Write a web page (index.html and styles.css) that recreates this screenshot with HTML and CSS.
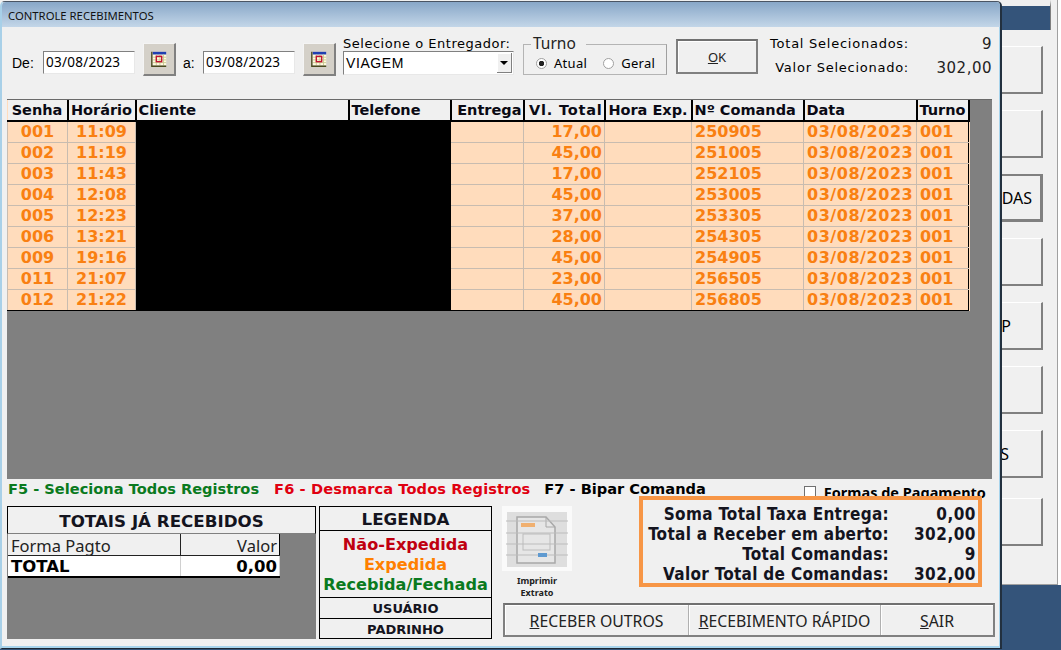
FILE: index.html
```html
<!DOCTYPE html>
<html lang="pt-BR">
<head>
    <meta charset="UTF-8">
    <meta name="viewport" content="width=device-width, initial-scale=1.0">
    <title>Controle Recebimentos</title>
    <link rel="stylesheet" href="styles.css">
</head>
<body>

    <!-- Janela principal, quase toda coberta pelo dialogo -->
    <div class="back-window">
        <div class="back-panel">
            <div class="back-title"></div>
            <div class="back-buttons">
                <button class="back-btn"></button>
                <button class="back-btn"></button>
                <button class="back-btn selected">DAS</button>
                <button class="back-btn"></button>
                <button class="back-btn tail-p">P</button>
                <button class="back-btn"></button>
                <button class="back-btn tail-s">S</button>
                <button class="back-btn last"></button>
            </div>
        </div>
    </div>

    <!-- Dialogo -->
    <div class="dialog">
        <div class="titlebar">CONTROLE RECEBIMENTOS</div>

        <div class="toolbar">
            <span class="lbl lbl-de">De:</span>
            <div class="date-input">03/08/2023</div>
            <button class="cal-btn">
                <svg width="18" height="18" viewBox="0 0 20 20">
                    <rect x="3" y="2" width="15" height="15" fill="#fffbe0"/>
                    <rect x="3" y="2" width="15" height="3" fill="#1f3fb0"/>
                    <path d="M3 8h15M3 11h15M3 14h15M7 5v12M11 5v12M15 5v12" stroke="#c8c890" stroke-width="1"/>
                    <rect x="7" y="7" width="6" height="6" fill="none" stroke="#c01030" stroke-width="1.5"/>
                    <path d="M2 2v16h16" fill="none" stroke="#4a4a20" stroke-width="1.5"/>
                </svg>
            </button>
            <span class="lbl lbl-a">a:</span>
            <div class="date-input">03/08/2023</div>
            <button class="cal-btn">
                <svg width="18" height="18" viewBox="0 0 20 20">
                    <rect x="3" y="2" width="15" height="15" fill="#fffbe0"/>
                    <rect x="3" y="2" width="15" height="3" fill="#1f3fb0"/>
                    <path d="M3 8h15M3 11h15M3 14h15M7 5v12M11 5v12M15 5v12" stroke="#c8c890" stroke-width="1"/>
                    <rect x="7" y="7" width="6" height="6" fill="none" stroke="#c01030" stroke-width="1.5"/>
                    <path d="M2 2v16h16" fill="none" stroke="#4a4a20" stroke-width="1.5"/>
                </svg>
            </button>

            <div class="combo-group">
                <div class="combo-label">Selecione o Entregador:</div>
                <div class="combo">
                    <span class="combo-value">VIAGEM</span>
                    <span class="combo-arrow"></span>
                </div>
            </div>

            <div class="turno">
                <span class="turno-legend">Turno</span>
                <div class="turno-options">
                    <span class="radio checked"></span><span class="radio-text">Atual</span>
                    <span class="radio"></span><span class="radio-text">Geral</span>
                </div>
            </div>

            <button class="ok-btn"><u>O</u>K</button>

            <div class="selected-totals">
                <span class="st-label">Total Selecionados:</span><span class="st-value">9</span>
                <span class="st-label">Valor Selecionado:</span><span class="st-value">302,00</span>
            </div>
        </div>

        <div class="grid-area">
            <table class="grid">
                <colgroup>
                    <col class="c-senha"><col class="c-hora"><col class="c-cliente"><col class="c-fone"><col class="c-entrega">
                    <col class="c-total"><col class="c-exp"><col class="c-comanda"><col class="c-data"><col class="c-turno">
                </colgroup>
                <thead>
                    <tr>
                        <th class="center">Senha</th><th class="center">Horário</th><th>Cliente</th><th>Telefone</th><th class="th-right">Entrega</th>
                        <th class="th-right th-wide">Vl. Total</th><th class="center">Hora Exp.</th><th>Nº Comanda</th><th>Data</th><th class="center">Turno</th>
                    </tr>
                </thead>
                <tbody id="gridBody"></tbody>
            </table>
        </div>

        <div class="hints">
            <span class="hint green">F5 - Seleciona Todos Registros</span>
            <span class="hint red">F6 - Desmarca Todos Registros</span>
            <span class="hint black">F7 - Bipar Comanda</span>
            <label class="check-row"><span class="check"></span>Formas de Pagamento</label>
        </div>

        <div class="bottom">
            <div class="recebidos">
                <div class="recebidos-title">TOTAIS JÁ RECEBIDOS</div>
                <table class="pay-table">
                    <tr class="pay-head"><td>Forma Pagto</td><td class="right">Valor</td></tr>
                    <tr class="pay-total"><td>TOTAL</td><td class="right">0,00</td></tr>
                </table>
            </div>

            <div class="legenda">
                <div class="leg-title">LEGENDA</div>
                <div class="leg-colors">
                    <div class="leg-red">Não-Expedida</div>
                    <div class="leg-orange">Expedida</div>
                    <div class="leg-green">Recebida/Fechada</div>
                </div>
                <div class="leg-row">USUÁRIO</div>
                <div class="leg-row">PADRINHO</div>
            </div>

            <div class="print">
                <div class="print-icon">
                    <svg width="70" height="65" viewBox="0 0 70 65">
                        <filter id="soft"><feGaussianBlur stdDeviation="0.45"/></filter>
                        <rect width="70" height="65" fill="#fafafa"/>
                        <g filter="url(#soft)">
                            <rect x="5" y="6" width="60" height="55" fill="#dedede"/>
                            <path d="M15 11h29l9 10v36h-38z" fill="#e6e6e6" stroke="#a8a8a8" stroke-width="1.5"/>
                            <path d="M44 11v10h9" fill="none" stroke="#a8a8a8" stroke-width="1"/>
                            <path d="M4 15h62M4 27h62M4 38h62M4 49h62" stroke="#bcbcbc" stroke-width="1"/>
                            <rect x="19" y="17" width="14" height="4" fill="#f0b070"/>
                            <rect x="21" y="28" width="27" height="16" fill="none" stroke="#bcbcbc" stroke-width="1"/>
                            <rect x="36" y="47" width="9" height="4" fill="#5f9ad0"/>
                        </g>
                    </svg>
                </div>
                <div class="print-text">Imprimir<br>Extrato</div>
            </div>

            <div class="right-col">
                <div class="summary">
                    <span class="sum-label">Soma Total Taxa Entrega:</span><span class="sum-value">0,00</span>
                    <span class="sum-label">Total a Receber em aberto:</span><span class="sum-value">302,00</span>
                    <span class="sum-label">Total Comandas:</span><span class="sum-value">9</span>
                    <span class="sum-label">Valor Total de Comandas:</span><span class="sum-value">302,00</span>
                </div>
                <div class="actions">
                    <button class="act-btn act-outros"><u>R</u>ECEBER OUTROS</button>
                    <button class="act-btn act-rapido"><u>R</u>ECEBIMENTO RÁPIDO</button>
                    <button class="act-btn act-sair"><u>S</u>AIR</button>
                </div>
            </div>
        </div>
    </div>

    <script>
        const rows = [
            ["001", "11:09", "17,00", "250905"],
            ["002", "11:19", "45,00", "251005"],
            ["003", "11:43", "17,00", "252105"],
            ["004", "12:08", "45,00", "253005"],
            ["005", "12:23", "37,00", "253305"],
            ["006", "13:21", "28,00", "254305"],
            ["009", "19:16", "45,00", "254905"],
            ["011", "21:07", "23,00", "256505"],
            ["012", "21:22", "45,00", "256805"]
        ];

        const body = document.getElementById("gridBody");

        rows.forEach((r) => {
            const tr = document.createElement("tr");
            tr.innerHTML = `
                <td class="center">${r[0]}</td>
                <td class="center">${r[1]}</td>
                <td class="hidden-cell" colspan="2"></td>
                <td></td>
                <td class="right">${r[2]}</td>
                <td></td>
                <td>${r[3]}</td>
                <td class="date-cell">03/08/2023</td>
                <td>001</td>`;
            body.appendChild(tr);
        });
    </script>
</body>
</html>
```

FILE: styles.css
```css
/* Geral */
html, body {
    margin: 0;
    padding: 0;
    height: 650px;
    overflow: hidden;
    background-color: #34547a;
    font-family: "DejaVu Sans", sans-serif;
    color: #000;
}

button {
    padding: 0;
    font-family: inherit;
    cursor: pointer;
}

/* Janela de tras */
.back-window {
    position: absolute;
    top: 0;
    left: 0;
    width: 1061px;
    height: 585px;
    background-color: #fff;
}

.back-panel {
    width: 1057px;
    height: 584px;
    background-color: #f0f0f0;
    border-right: 1px solid #a0a0a0;
    border-bottom: 1px solid #a0a0a0;
}

.back-title {
    height: 24px;
    width: 1050px;
    margin-top: 0;
    border-top: 6px solid #f0f0f0;
    border-right: 1px solid #808080;
    background-color: #34547a;
}

.back-buttons {
    display: flex;
    flex-direction: column;
    align-items: flex-end;
    gap: 16px;
    width: 1043px;
    padding-top: 16px;
}

.back-btn {
    width: 140px;
    height: 48px;
    box-sizing: border-box;
    background-color: #f0f0f0;
    border: none;
    border-top: 1px solid #fff;
    border-left: 1px solid #fff;
    border-right: 2px solid #808080;
    border-bottom: 2px solid #808080;
    font-family: "Noto Sans", sans-serif;
    font-size: 16px;
    text-align: right;
    padding-right: 8px;
    color: #000;
}

.back-btn.selected {
    border-top: 2px solid #808080;
    border-left: 2px solid #808080;
    border-right: 3px solid #808080;
    border-bottom: 3px solid #808080;
}

.back-btn.tail-p { padding-right: 30px; }
.back-btn.tail-s { padding-right: 32px; }
.back-btn.last { margin-top: 4px; }

/* Dialogo */
.dialog {
    position: absolute;
    top: 1px;
    left: 0;
    width: 1002px;
    height: 648px;
    box-sizing: border-box;
    background-color: #f0f0f0;
    border: 1px solid #1d2733;
    border-left: 2px solid #a8d0e8;
    border-right: 2px solid #22303f;
    border-top: 1px solid #4a5564;
    border-radius: 5px 5px 0 0;
    box-shadow: inset -1px 0 0 #a8d4ec, inset 0 -2px 0 #a8d4ec;
    display: flex;
    flex-direction: column;
}

.titlebar {
    height: 25px;
    flex: none;
    padding-left: 6px;
    background: linear-gradient(#88a7c8, #c3d6e8);
    border-radius: 4px 4px 0 0;
    font-family: "Noto Sans", sans-serif;
    font-size: 11.3px;
    line-height: 28px;
    color: #111;
    white-space: nowrap;
}

/* Barra de filtros */
.toolbar {
    display: flex;
    align-items: flex-start;
    height: 72px;
    flex: none;
}

.lbl {
    font-family: "Liberation Sans", sans-serif;
    font-size: 14px;
}

.lbl-de { margin: 28px 0 0 10px; width: 31px; }
.lbl-a { margin: 28px 0 0 7px; width: 20px; }

.date-input {
    width: 92px;
    height: 23px;
    margin-top: 24px;
    box-sizing: border-box;
    background-color: #fff;
    border: 1px solid #808080;
    border-right-color: #e8e8e8;
    border-bottom-color: #e8e8e8;
    font-family: "Noto Sans", sans-serif;
    font-size: 13.5px;
    line-height: 20px;
    letter-spacing: 0.25px;
    padding-left: 2px;
}

.cal-btn {
    width: 33px;
    height: 33px;
    margin: 16px 0 0 8px;
    display: flex;
    align-items: center;
    justify-content: center;
    background-color: #d4d0c8;
    border: 1px solid #f4f4f4;
    border-right: 2px solid #808080;
    border-bottom: 2px solid #808080;
}

.combo-group {
    width: 173px;
    margin: 9px 0 0 7px;
}

.combo-label {
    font-size: 13px;
    letter-spacing: 0.52px;
    line-height: 15px;
    white-space: nowrap;
}

.combo {
    display: flex;
    justify-content: space-between;
    align-items: center;
    width: 171px;
    height: 24px;
    box-sizing: border-box;
    background-color: #fff;
    border: 1px solid #808080;
    border-right-color: #e8e8e8;
    border-bottom-color: #e8e8e8;
}

.combo-value {
    font-family: "Liberation Sans", sans-serif;
    font-size: 14px;
    letter-spacing: 0.6px;
    padding-left: 2px;
}

.combo-arrow {
    position: relative;
    width: 15px;
    height: 20px;
    margin-right: 1px;
    background-color: #f0f0f0;
    box-shadow: inset -1px -1px 0 #808080, inset 1px 1px 0 #fff;
}

.combo-arrow::after {
    content: "";
    position: absolute;
    top: 8px;
    left: 3px;
    border-top: 4px solid #000;
    border-left: 4px solid transparent;
    border-right: 4px solid transparent;
}

.turno {
    position: relative;
    width: 144px;
    height: 31px;
    box-sizing: border-box;
    margin: 17px 0 0 7px;
    border: 1px solid #b4b4b4;
    border-right-color: #a0a0a0;
    padding-top: 10px;
}

.turno-legend {
    position: absolute;
    top: -12px;
    left: 7px;
    padding: 0 10px 0 2px;
    background-color: #f0f0f0;
    font-family: "Noto Sans", sans-serif;
    font-size: 15.5px;
    line-height: 20px;
    color: #222;
}

.turno-options {
    display: flex;
    align-items: center;
    font-family: "Noto Sans", sans-serif;
    font-size: 13px;
    line-height: 16px;
    padding-left: 12px;
}

.radio {
    flex: none;
    width: 9px;
    height: 9px;
    border-radius: 50%;
    border: 1px solid #a0a0a0;
    background-color: #fff;
    box-sizing: content-box;
}

.radio.checked {
    background: radial-gradient(circle, #222 0 2.5px, #fff 3px);
}

.radio-text {
    margin-left: 7px;
    margin-right: 16px;
    letter-spacing: 0.3px;
}

.radio-text:last-child {
    margin-right: 0;
}

.ok-btn {
    width: 82px;
    height: 35px;
    margin: 12px 0 0 9px;
    box-sizing: border-box;
    background-color: #f0f0f0;
    border: 2px solid #808080;
    border-top-color: #707070;
    box-shadow: inset 1px 1px 0 #fff;
    font-family: "Noto Sans", sans-serif;
    font-size: 13px;
    color: #222;
}

.selected-totals {
    display: grid;
    grid-template-columns: 140px 83px;
    grid-auto-rows: 24px;
    margin: 5px 0 0 11px;
    width: 223px;
    font-size: 13px;
    line-height: 24px;
    white-space: nowrap;
}

.st-label {
    text-align: right;
    letter-spacing: 0.75px;
}

.st-value {
    text-align: right;
    font-size: 15px;
    letter-spacing: 0.5px;
    color: #222;
}

/* Grade */
.grid-area {
    height: 380px;
    flex: none;
    margin: 0 7px 0 5px;
    background-color: #808080;
    border-top: 1px solid #6a6a6a;
    box-sizing: border-box;
    width: 985px;
}

.grid {
    border-collapse: collapse;
    table-layout: fixed;
    width: 961px;
    font-size: 16px;
    font-weight: bold;
    color: #f98012;
    background-color: #ffdcbc;
}

.c-senha { width: 60px; }
.c-hora { width: 68px; }
.c-cliente { width: 213px; }
.c-fone { width: 102px; }
.c-entrega { width: 73px; }
.c-total { width: 81px; }
.c-exp { width: 87px; }
.c-comanda { width: 112px; }
.c-data { width: 113px; }
.c-turno { width: 52px; }

.grid th {
    height: 20px;
    padding: 1px 0 0 2px;
    box-sizing: border-box;
    background-color: #f0f0f0;
    border-right: 2px solid #000;
    border-bottom: 2px solid #000;
    font-size: 14.5px;
    line-height: 19px;
    color: #0a0a14;
    text-align: left;
    white-space: nowrap;
    overflow: hidden;
}

.grid th.center {
    padding-left: 0;
    text-align: center;
}

.grid th.th-right {
    padding: 1px 1px 0 0;
    text-align: right;
}

.grid th.th-wide {
    letter-spacing: 0.8px;
}

.grid td {
    height: 20px;
    padding: 0 0 0 3px;
    border: 1px solid #c8bcb0;
    line-height: 20px;
    white-space: nowrap;
    overflow: hidden;
}

.grid td:last-child {
    border-right-color: #000;
}

.grid tbody tr:last-child td {
    border-bottom-color: #000;
}

.grid td.center {
    padding: 0;
    text-align: center;
}

.grid td.right {
    padding: 0 2px 0 0;
    text-align: right;
}

.grid td.date-cell {
    letter-spacing: 0.55px;
}

.grid td.hidden-cell {
    background-color: #000;
    border-color: #000;
}

/* Atalhos */
.hints {
    display: flex;
    align-items: flex-start;
    height: 26px;
    flex: none;
    padding: 1px 0 0 6px;
    font-size: 14.6px;
    font-weight: bold;
    line-height: 18px;
    white-space: nowrap;
}

.hint { margin-right: 14px; }
.hint.green { margin-right: 15px; }
.hint.red { letter-spacing: 0.1px; }
.green { color: #0a7a1e; }
.red { color: #e00010; }
.black { color: #000; }

.check-row {
    display: flex;
    align-items: center;
    margin: 3px 0 0 84px;
    font-family: "Noto Sans", sans-serif;
    font-size: 14.5px;
    line-height: 18px;
}

.check {
    width: 10px;
    height: 10px;
    margin-right: 8px;
    background-color: #fff;
    border: 1px solid #707070;
}

/* Parte de baixo */
.bottom {
    display: flex;
    align-items: flex-start;
    padding-left: 5px;
}

.recebidos {
    width: 309px;
    height: 133px;
    flex: none;
    box-sizing: border-box;
    background-color: #808080;
}

.recebidos-title {
    height: 28px;
    box-sizing: border-box;
    background-color: #f0f0f0;
    border: 1px solid #000;
    border-bottom: 1px solid #808080;
    text-align: center;
    font-size: 16.7px;
    font-weight: bold;
    line-height: 28px;
    color: #14141e;
}

.pay-table {
    border-collapse: collapse;
    table-layout: fixed;
    width: 272px;
    margin-left: 1px;
    border-right: 1px solid #000;
    border-bottom: 2px solid #000;
}

.pay-table td {
    box-sizing: border-box;
}

.pay-table .right { text-align: right; width: 99px; }

.pay-head td {
    height: 21px;
    padding: 2px 2px 0 3px;
    line-height: 19px;
    background-color: #f0f0f0;
    border-right: 1px solid #222;
    border-bottom: 1px solid #222;
    font-family: "Noto Sans", sans-serif;
    font-size: 16.5px;
    color: #222;
}

.pay-head td.right { border-right: none; }

.pay-total td {
    height: 20px;
    padding: 2px 2px 0 3px;
    line-height: 18px;
    background-color: #fff;
    border-right: 1px solid #d0d0d0;
    font-size: 16.5px;
    font-weight: bold;
}

.legenda {
    width: 173px;
    height: 133px;
    flex: none;
    margin-left: 3px;
    box-sizing: border-box;
    border: 1px solid #000;
    display: flex;
    flex-direction: column;
    text-align: center;
    font-weight: bold;
}

.leg-title {
    height: 23px;
    flex: none;
    border-bottom: 1px solid #000;
    font-size: 16.7px;
    line-height: 25px;
    color: #14141e;
}

.leg-colors {
    height: 67px;
    flex: none;
    font-size: 16.1px;
    line-height: 20px;
    padding-top: 4px;
    box-sizing: border-box;
    border-bottom: 1px solid #000;
    white-space: nowrap;
}

.leg-red { color: #c00010; }
.leg-orange { color: #ff8000; }
.leg-green { color: #0a7a1e; }

.leg-row {
    flex: 1;
    font-size: 13px;
    line-height: 21px;
    color: #14141e;
    overflow: hidden;
}

.leg-row + .leg-row {
    border-top: 1px solid #000;
}

.print {
    width: 70px;
    flex: none;
    margin-left: 10px;
    text-align: center;
}

.print-icon { height: 65px; }

.print-icon svg { display: block; }

.print-text {
    margin-top: 4px;
    font-family: "Noto Sans", sans-serif;
    font-size: 9px;
    font-weight: bold;
    line-height: 12px;
    color: #222;
}

.right-col {
    margin-left: -69px;
    display: flex;
    flex-direction: column;
    align-items: flex-end;
    width: 492px;
}

.summary {
    position: relative;
    display: grid;
    grid-template-columns: 1fr 87px;
    grid-auto-rows: 20px;
    width: 343px;
    height: 91px;
    margin-top: -10px;
    margin-right: 13px;
    box-sizing: border-box;
    padding: 4px 2px 0 0;
    background-color: #f0f0f0;
    border: 4px solid #f79646;
    font-family: "DejaVu Sans Condensed", "DejaVu Sans", sans-serif;
    font-stretch: condensed;
    font-size: 17px;
    font-weight: bold;
    line-height: 20px;
    color: #14141e;
    white-space: nowrap;
}

.sum-label { text-align: right; letter-spacing: 0.3px; }
.sum-value { text-align: right; letter-spacing: 0.5px; }

.actions {
    display: flex;
    width: 492px;
    height: 34px;
    margin-top: 16px;
    box-sizing: border-box;
    border: 2px solid #808080;
    border-top-color: #707070;
    background-color: #f0f0f0;
}

.act-btn {
    height: 100%;
    box-sizing: border-box;
    padding-top: 2px;
    background-color: #f0f0f0;
    border: none;
    border-right: 1px solid #b0b0b0;
    box-shadow: inset 1px 1px 0 #fff;
    font-family: "Noto Sans", sans-serif;
    font-size: 15.8px;
    color: #222;
    white-space: nowrap;
}

.act-outros { width: 184px; }
.act-rapido { width: 192px; }
.act-sair { flex: 1; border-right: none; }
```
